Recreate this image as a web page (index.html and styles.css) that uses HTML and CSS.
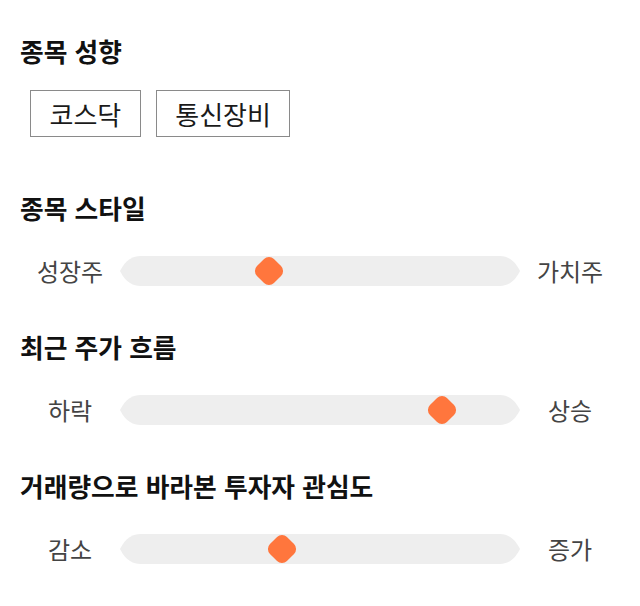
FILE: index.html
```html
<!DOCTYPE html>
<html lang="ko">
<head>
<meta charset="utf-8">
<link rel="stylesheet" href="styles.css">
</head>
<body>
<main class="page">
  <section class="section section-tags">
    <h2 class="title">종목 성향</h2>
    <div class="tags">
      <span class="tag">코스닥</span>
      <span class="tag">통신장비</span>
    </div>
  </section>

  <section class="section">
    <h2 class="title">종목 스타일</h2>
    <div class="slider">
      <span class="label">성장주</span>
      <div class="track">
        <svg class="track-bg" viewBox="0 0 400 30" width="400" height="30"><path d="M20 0H380C391 0 397 9 400 15C397 21 391 30 380 30H20C9 30 3 21 0 15C3 9 9 0 20 0Z" fill="#eeeeee"/></svg>
        <span class="thumb" style="left:37.25%"></span>
      </div>
      <span class="label">가치주</span>
    </div>
  </section>

  <section class="section">
    <h2 class="title">최근 주가 흐름</h2>
    <div class="slider">
      <span class="label">하락</span>
      <div class="track">
        <svg class="track-bg" viewBox="0 0 400 30" width="400" height="30"><path d="M20 0H380C391 0 397 9 400 15C397 21 391 30 380 30H20C9 30 3 21 0 15C3 9 9 0 20 0Z" fill="#eeeeee"/></svg>
        <span class="thumb" style="left:80.4%"></span>
      </div>
      <span class="label">상승</span>
    </div>
  </section>

  <section class="section">
    <h2 class="title">거래량으로 바라본 투자자 관심도</h2>
    <div class="slider">
      <span class="label">감소</span>
      <div class="track">
        <svg class="track-bg" viewBox="0 0 400 30" width="400" height="30"><path d="M20 0H380C391 0 397 9 400 15C397 21 391 30 380 30H20C9 30 3 21 0 15C3 9 9 0 20 0Z" fill="#eeeeee"/></svg>
        <span class="thumb" style="left:40.5%"></span>
      </div>
      <span class="label">증가</span>
    </div>
  </section>
</main>
</body>
</html>
```

FILE: styles.css
```css
html, body {
  margin: 0;
  padding: 0;
  background: #ffffff;
}

body {
  font-family: "Noto Sans CJK KR", "Noto Sans", sans-serif;
  color: #111111;
}

.page {
  padding: 34px 20px 0 20px;
  display: flex;
  flex-direction: column;
}

.section {
  display: flex;
  flex-direction: column;
  gap: 31px;
  margin-bottom: 44px;
}

.section-tags {
  gap: 22px;
  margin-bottom: 54px;
}

.title {
  margin: 0;
  font-size: 25.75px;
  line-height: 34px;
  height: 34px;
  font-weight: 700;
  color: #111111;
}

.tags {
  display: flex;
  gap: 15px;
  padding-left: 10px;
}

.tag {
  display: block;
  box-sizing: border-box;
  height: 47px;
  line-height: 45px;
  padding: 0 18.5px;
  border: 1px solid #8a8a8a;
  font-size: 26px;
  color: #1a1a1a;
}

.slider {
  display: grid;
  grid-template-columns: 100px 400px 100px;
  align-items: center;
  height: 30px;
}

.label {
  text-align: center;
  font-size: 24px;
  line-height: 30px;
  color: #444444;
}

.track {
  position: relative;
  width: 400px;
  height: 30px;
}

.track-bg {
  display: block;
}

.thumb {
  position: absolute;
  top: 50%;
  width: 24px;
  height: 24px;
  border-radius: 7px;
  background: #ff763d;
  transform: translate(-50%, -50%) rotate(45deg);
}
```
